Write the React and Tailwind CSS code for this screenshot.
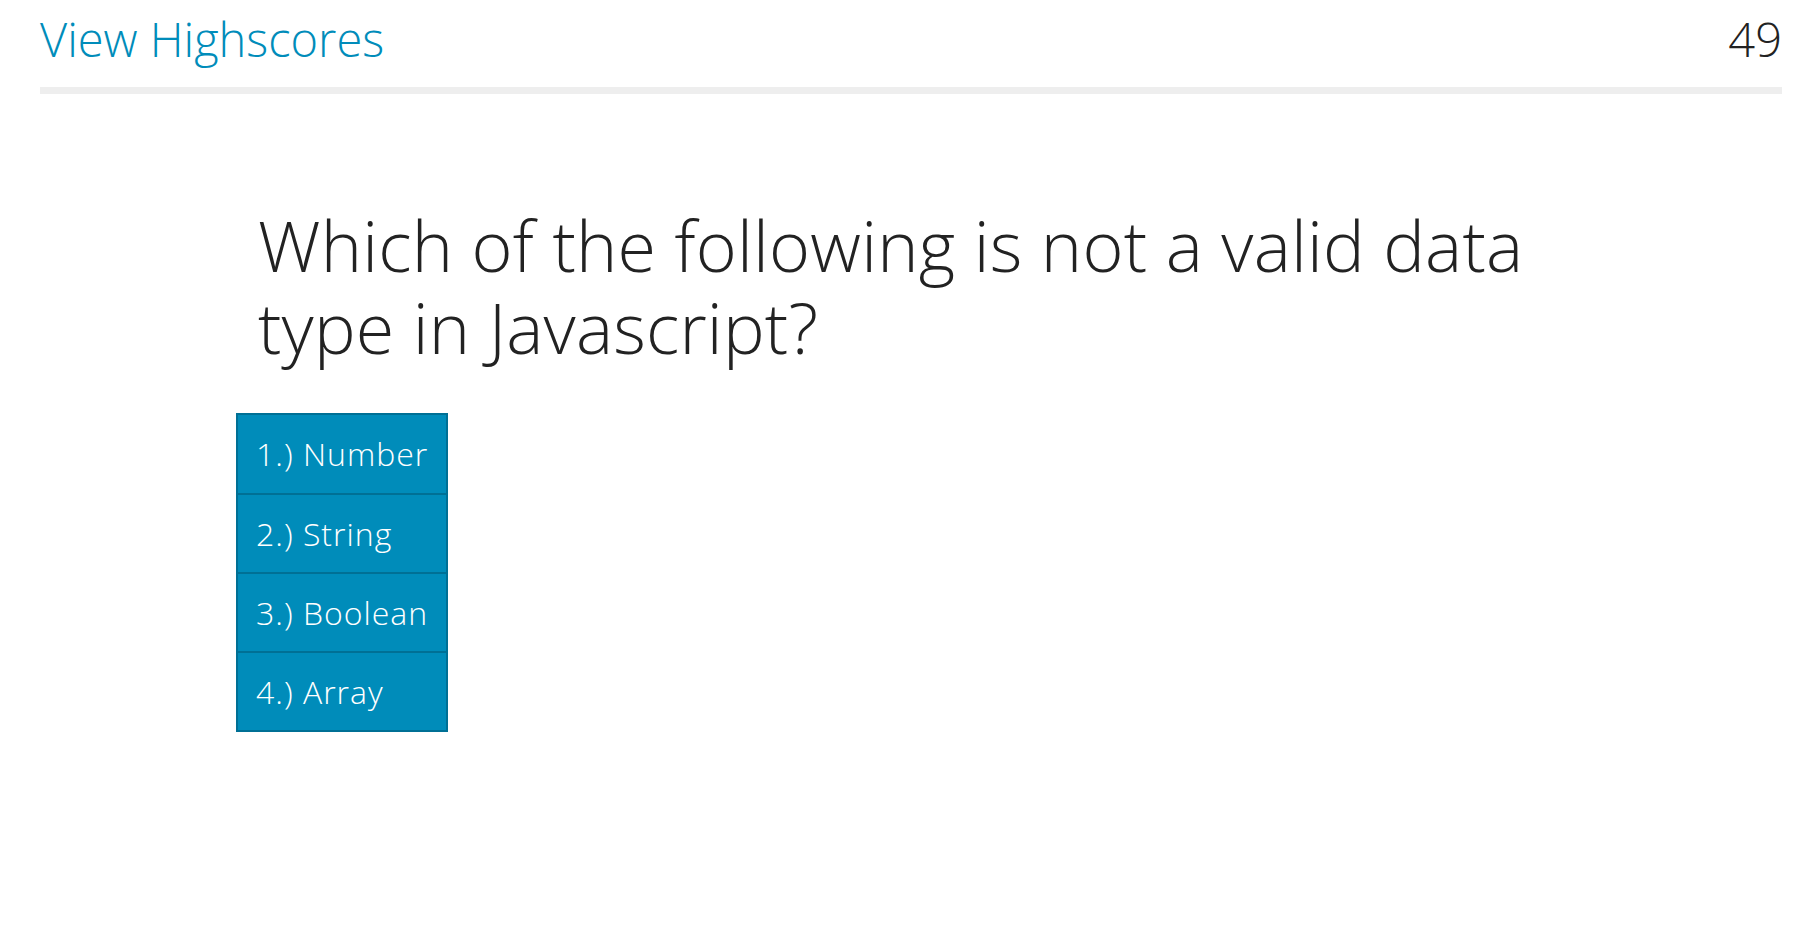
export default function App() {
  const opts = ["1.) Number", "2.) String", "3.) Boolean", "4.) Array"];
  return (
    <div className="min-h-[945px] bg-white font-light" style={{ fontFamily: '"Open Sans", sans-serif' }}>
      <div className="ml-[40px] mr-[38px] flex items-start justify-between pt-[7px] h-[87px]">
        <a className="text-[47px] leading-[64px] text-[#008cba]">View Highscores</a>
        <span className="text-[47px] leading-[64px] text-[#222222]">49</span>
      </div>
      <div className="ml-[40px] mr-[38px] h-[7px] bg-[#eeeeee]"></div>
      <div className="ml-[236px] mr-[240px] pt-[110px]">
        <h1 className="pl-[22px] text-[70px] leading-[82px] tracking-[0.2px] text-[#222222] font-light">
          Which of the following is not a valid data type in Javascript?
        </h1>
        <div className="mt-[45px] w-[212px] border-2 border-[#007095] bg-[#008cba] flex flex-col">
          {opts.map((o, i) => (
            <div
              key={o}
              className={`${i > 0 ? "h-[79px] border-t-2 border-[#007095]" : "h-[78px]"} flex items-center pl-[18px] text-[32px] tracking-[1px] text-white font-light`}
            >
              {o}
            </div>
          ))}
        </div>
      </div>
    </div>
  );
}
